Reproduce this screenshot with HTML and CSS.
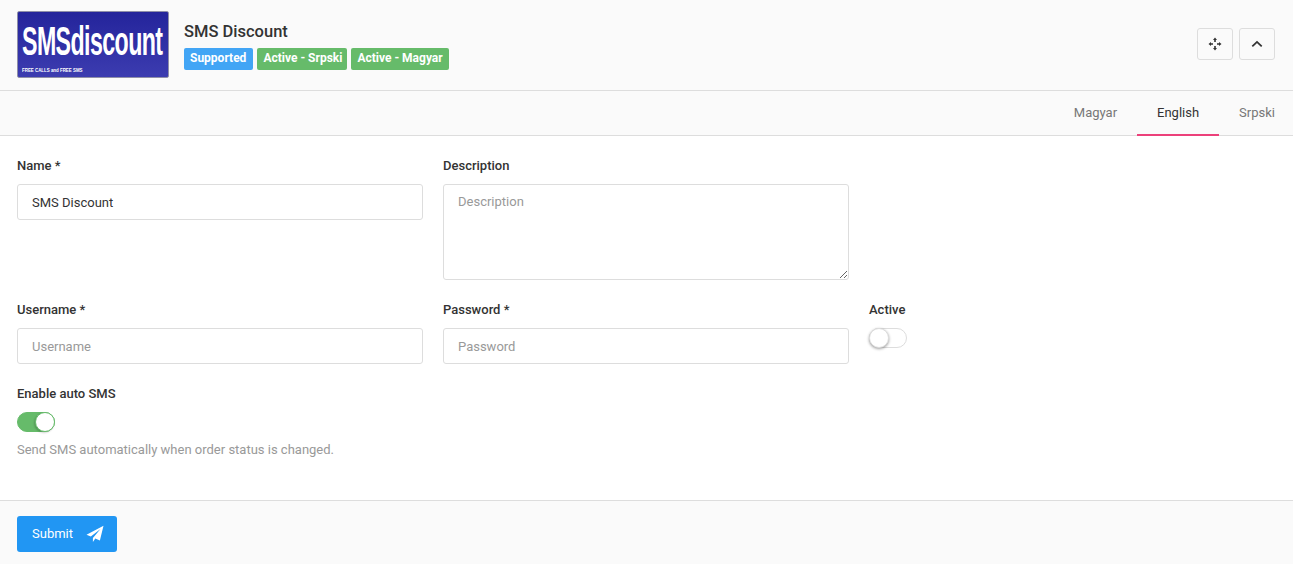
FILE: index.html
```html
<!DOCTYPE html>
<html lang="en">
<head>
<meta charset="utf-8">
<title>SMS Discount</title>
<link rel="stylesheet" href="styles.css">
</head>
<body>
<div class="card">
  <header class="head">
    <div class="logo">
      <span class="logo-main">SMSdiscount</span>
      <span class="logo-sub">FREE CALLS and FREE SMS</span>
    </div>
    <div class="head-info">
      <h1 class="title">SMS Discount</h1>
      <div class="badges">
        <span class="badge badge-blue">Supported</span>
        <span class="badge badge-green badge-narrow">Active - Srpski</span>
        <span class="badge badge-green">Active - Magyar</span>
      </div>
    </div>
    <div class="head-actions">
      <button class="icon-btn" type="button" aria-label="Move">
        <svg width="14" height="14" viewBox="0 0 14 14"><path class="ico" d="M7 .5 9 3H7.800V5H6.200V3H5zM7 13.500 5 11H6.200V9H7.800V11H9zM.5 7 3 5V6.200H5V7.800H3V9zM13.500 7 11 9V7.800H9V6.200H11V5z"/></svg>
      </button>
      <button class="icon-btn" type="button" aria-label="Collapse">
        <svg width="12" height="8" viewBox="0 0 12 8"><path class="chev" d="M1.300 6.400 6 1.900l4.700 4.500"/></svg>
      </button>
    </div>
  </header>
  <nav class="tabs">
    <a class="tab">Magyar</a>
    <a class="tab tab-active">English</a>
    <a class="tab tab-last">Srpski</a>
  </nav>
  <form class="form">
    <div class="field">
      <label class="label">Name *</label>
      <input class="input" type="text" value="SMS Discount">
    </div>
    <div class="field">
      <label class="label">Description</label>
      <textarea class="input area" placeholder="Description"></textarea>
    </div>
    <div class="field"></div>
    <div class="field">
      <label class="label">Username *</label>
      <input class="input" type="text" placeholder="Username">
    </div>
    <div class="field">
      <label class="label">Password *</label>
      <input class="input" type="text" placeholder="Password">
    </div>
    <div class="field">
      <label class="label">Active</label>
      <span class="switch"><span class="knob"></span></span>
    </div>
    <div class="field">
      <label class="label">Enable auto SMS</label>
      <span class="switch switch-on"><span class="knob"></span></span>
      <p class="help">Send SMS automatically when order status is changed.</p>
    </div>
  </form>
  <footer class="foot">
    <button class="submit" type="button"><span class="submit-text">Submit</span>
      <svg class="plane" width="18" height="18" viewBox="0 0 18 18"><path d="M17.500.8 13.900 15.600 9.300 13.500 6.900 17V13L14.500 4 4.800 11.600.5 9.700z"/></svg>
    </button>
  </footer>
</div>
</body>
</html>
```
FILE: styles.css
```css
* { box-sizing: border-box; }
html, body { margin: 0; height: 100%; }
body {
  font-family: Roboto, "Liberation Sans", sans-serif;
  font-size: 13px;
  color: #333;
  background: #fff;
  overflow: hidden;
}
.card { display: flex; flex-direction: column; height: 564px; }

.head {
  height: 91px;
  flex: none;
  display: flex;
  align-items: center;
  padding: 0 18px 1px 17px;
  background: #fafafa;
  border-bottom: 1px solid #ddd;
}
.logo {
  width: 152px;
  height: 67px;
  flex: none;
  display: flex;
  flex-direction: column;
  padding: 9px 0 0 4px;
  overflow: hidden;
  border: 1px solid #8f8fa8;
  border-radius: 2px;
  background: linear-gradient(180deg, #24249b 0%, #3c3cb0 100%);
  color: #fff;
  font-family: "Liberation Sans", sans-serif;
}
.logo-main {
  display: block;
  font-size: 41px;
  line-height: 41px;
  letter-spacing: -1px;
  white-space: nowrap;
  transform: scaleX(.565);
  transform-origin: left center;
  font-weight: 700;
}
.logo-sub {
  display: block;
  margin-top: 4px;
  font-size: 6px;
  line-height: 8px;
  font-weight: 700;
  white-space: nowrap;
  transform: scaleX(.735);
  transform-origin: left center;
}
.head-info { margin-left: 15px; padding-top: 2px; }
.title {
  margin: 0 0 6px;
  font-size: 16.500px;
  line-height: 20px;
  font-weight: 500;
  color: #333;
}
.badges { display: flex; gap: 4px; }
.badge {
  height: 22px;
  padding: 0 6px;
  border-radius: 2px;
  font-size: 12px;
  line-height: 21px;
  font-weight: 700;
  color: #fff;
}
.badge-blue { background: #42a5f5; padding-right: 7px; }
.badge-green { background: #66bb6a; }
.badge-narrow { padding-right: 5px; }
.head-actions { margin-left: auto; margin-bottom: 2px; display: flex; gap: 6px; }
.icon-btn {
  width: 36px;
  height: 32px;
  padding: 0;
  display: flex;
  align-items: center;
  justify-content: center;
  background: #fafafa;
  border: 1px solid #ddd;
  border-radius: 3px;
}
.ico { fill: #333; }
.chev { fill: none; stroke: #333; stroke-width: 1.8; }

.tabs {
  height: 45px;
  flex: none;
  display: flex;
  justify-content: flex-end;
  padding-right: 18px;
  border-bottom: 1px solid #ddd;
  background: #fafafa;
}
.tab {
  height: 45px;
  padding: 0 20px;
  line-height: 44px;
  color: #777;
}
.tab-active { color: #333; border-bottom: 2px solid #ec407a; }
.tab-last { padding-right: 0; }

.form {
  flex: 1;
  display: grid;
  grid-template-columns: repeat(3, 1fr);
  grid-auto-rows: min-content;
  column-gap: 20px;
  align-content: start;
  padding: 20px 18px 0 17px;
}
.field { margin-bottom: 20px; display: flex; flex-direction: column; align-items: flex-start; }
.label {
  font-weight: 500;
  line-height: 20px;
  margin-bottom: 8px;
  color: #333;
}
.input {
  width: 100%;
  height: 36px;
  padding: 0 14px;
  font: 13px Roboto, "Liberation Sans", sans-serif;
  color: #333;
  background: #fff;
  border: 1px solid #ddd;
  border-radius: 3px;
  outline: none;
}
.input::placeholder { color: #999; opacity: 1; }
.area { height: 96px; padding-top: 8px; line-height: 18px; display: block; }
.switch {
  position: relative;
  display: block;
  width: 38px;
  height: 20px;
  background: #fff;
  border: 1px solid #ddd;
  border-radius: 10px;
}
.knob {
  position: absolute;
  left: -1px;
  top: -1px;
  width: 20px;
  height: 20px;
  background: #fff;
  border: 1px solid #ddd;
  border-radius: 50%;
  box-shadow: 0 1px 3px rgba(0, 0, 0, .4);
}
.switch-on { background: #66bb6a; border-color: #66bb6a; }
.switch-on .knob { left: 17px; border-color: #66bb6a; box-shadow: -1px 1px 2px rgba(0, 0, 0, .2); }
.help { margin: 8px 0 0; line-height: 20px; color: #999; white-space: nowrap; }

.foot {
  height: 64px;
  flex: none;
  padding: 15px 17px 0;
  background: #fafafa;
  border-top: 1px solid #ddd;
}
.submit {
  width: 100px;
  height: 36px;
  padding: 0 13px 0 15px;
  display: flex;
  align-items: center;
  justify-content: space-between;
  font: 13px Roboto, "Liberation Sans", sans-serif;
  color: #fff;
  background: #2196f3;
  border: 0;
  border-radius: 3px;
}
.submit-text { margin-top: -2px; }
.plane { fill: #fff; }
```
